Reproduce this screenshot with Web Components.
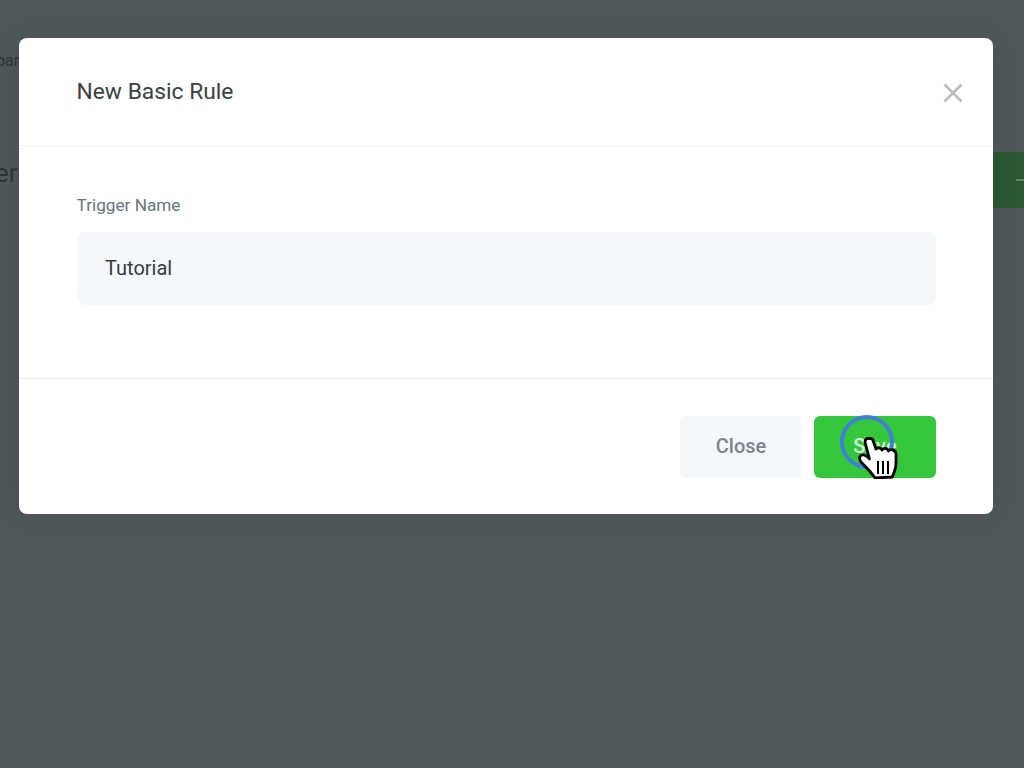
<!DOCTYPE html>
<html>
<head>
<meta charset="utf-8">
<title>New Basic Rule</title>
<style>
    html, body { margin: 0; height: 100%; background: #50585b; overflow: hidden; }
    body { font-family: Roboto, "Liberation Sans", sans-serif; }
</style>
</head>
<body>
<page-backdrop></page-backdrop>
<rule-modal heading="New Basic Rule">
    <rule-field label="Trigger Name" value="Tutorial"></rule-field>
    <modal-button slot="footer" kind="plain">Close</modal-button>
    <modal-button slot="footer" kind="save" clicking>Save</modal-button>
</rule-modal>

<script>
(function(){
    const backdropTemplate = document.createElement("template");
    backdropTemplate.innerHTML = `
        <style>
        :host {
            display: block;
            position: absolute;
            inset: 0;
            color: #2f3537;
            overflow: hidden;
        }
        .crumb { position: absolute; left: -14px; top: 51px; font-size: 16px; line-height: 19px; }
        .title { position: absolute; left: -5px; top: 158px; font-size: 26px; line-height: 30px; }
        .add {
            position: absolute; left: 960px; top: 152px; width: 100px; height: 56px;
            background: #2a5833; border-radius: 4px; color: #5d8a64;
        }
        .add i { position: absolute; left: 56px; top: 27px; width: 8px; height: 2px; background: currentColor; }
        </style>
        <div class="crumb">Board</div>
        <div class="title">er</div>
        <div class="add"><i></i></div>
    `;

    class PageBackdrop extends HTMLElement {
        constructor() {
            super();
            this.attachShadow({mode: "open"}).appendChild(backdropTemplate.content.cloneNode(true));
        }
    }

    const modalTemplate = document.createElement("template");
    modalTemplate.innerHTML = `
        <style>
        :host {
            display: block;
            position: absolute;
            left: 19px;
            top: 38px;
            width: 974px;
            background: #fff;
            border-radius: 8px;
            box-shadow: 0 0 24px rgba(40, 45, 48, .18);
            color: #3a4144;
        }
        header {
            display: flex;
            justify-content: space-between;
            align-items: center;
            height: 107px;
            padding: 0 28px 0 57.5px;
            border-bottom: 1px solid #eff2f5;
        }
        h2 { margin: 0; font-size: 22.8px; font-weight: 400; line-height: 28px; }
        svg { display: block; width: 24px; height: 24px; position: relative; top: 1px; }
        main {
            height: 233px;
            box-sizing: border-box;
            padding: 49px 57px 0 58px;
            border-bottom: 1px solid #ebeef1;
        }
        footer {
            display: flex;
            justify-content: flex-end;
            gap: 12px;
            height: 135px;
            box-sizing: border-box;
            padding: 37px 57px 0 0;
        }
        </style>
        <header>
            <h2 id="heading"></h2>
            <svg viewBox="0 0 24 24" fill="none" stroke="#b9bdc0" stroke-width="2.6">
                <path d="M3.5 3.5 L20.5 20.5 M20.5 3.5 L3.5 20.5"></path>
            </svg>
        </header>
        <main><slot></slot></main>
        <footer><slot name="footer"></slot></footer>
    `;

    class RuleModal extends HTMLElement {
        constructor() {
            super();
            this._shadowRoot = this.attachShadow({mode: "open"});
            this._shadowRoot.appendChild(modalTemplate.content.cloneNode(true));
        }

        connectedCallback() {
            this._shadowRoot.getElementById("heading").textContent = this.getAttribute("heading");
        }
    }

    const fieldTemplate = document.createElement("template");
    fieldTemplate.innerHTML = `
        <style>
        :host { display: block; }
        label {
            display: block;
            font-size: 17.2px;
            line-height: 20px;
            color: #66767c;
            margin-bottom: 17px;
            margin-left: -0.5px;
        }
        .box {
            height: 73px;
            box-sizing: border-box;
            padding: 0 28px 2px;
            display: flex;
            align-items: center;
            background: #f5f8fc;
            border-radius: 8px;
            font-size: 20px;
            color: #343b3f;
        }
        </style>
        <label id="label"></label>
        <div class="box" id="value"></div>
    `;

    class RuleField extends HTMLElement {
        constructor() {
            super();
            this._shadowRoot = this.attachShadow({mode: "open"});
            this._shadowRoot.appendChild(fieldTemplate.content.cloneNode(true));
        }

        connectedCallback() {
            this._shadowRoot.getElementById("label").textContent = this.getAttribute("label");
            this._shadowRoot.getElementById("value").textContent = this.getAttribute("value");
        }
    }

    const buttonTemplate = document.createElement("template");
    buttonTemplate.innerHTML = `
        <style>
        :host {
            display: flex;
            position: relative;
            width: 122px;
            height: 62px;
            box-sizing: border-box;
            padding-bottom: 2px;
            align-items: center;
            justify-content: center;
            border-radius: 6px;
            font-size: 20px;
            font-weight: 500;
        }
        :host([kind="plain"]) { background: #f5f8fc; color: #7c858b; }
        :host([kind="save"]) { background: #34c73b; color: #d6f5d6; }
        .click { display: none; }
        :host([clicking]) .click { display: block; }
        .ring {
            position: absolute; left: 26px; top: -1px; width: 54px; height: 54px;
            box-sizing: border-box; border: 4px solid #3f80d6; border-radius: 50%;
        }
        .hand { position: absolute; left: 44px; top: 21px; width: 40px; height: 42px; }
        </style>
        <slot></slot>
        <div class="click">
            <div class="ring"></div>
            <svg class="hand" viewBox="0 0 40 42">
                <path d="M7 5 C7 0 15 0 15.5 5 L18 12 C20 10 23 10.5 24 13 C26 10.5 29.5 11 30.5 14 C32.5 11.5 37.5 12.5 38 17 L38 27 C38 32 35.5 36 34.5 40 L17 41 C14 36 8 30 3 25 C0 21 2 17 6 18 C8 18.5 10 20 11.5 22 Z" fill="#fff" stroke="#000" stroke-width="2.8" stroke-linejoin="round"></path>
                <path d="M20 24 V37 M25 24 V37 M30 24 V37" stroke="#000" stroke-width="2" fill="none"></path>
            </svg>
        </div>
    `;

    class ModalButton extends HTMLElement {
        constructor() {
            super();
            this.attachShadow({mode: "open"}).appendChild(buttonTemplate.content.cloneNode(true));
        }
    }

    customElements.define("page-backdrop", PageBackdrop);
    customElements.define("rule-modal", RuleModal);
    customElements.define("rule-field", RuleField);
    customElements.define("modal-button", ModalButton);
})();
</script>
</body>
</html>
